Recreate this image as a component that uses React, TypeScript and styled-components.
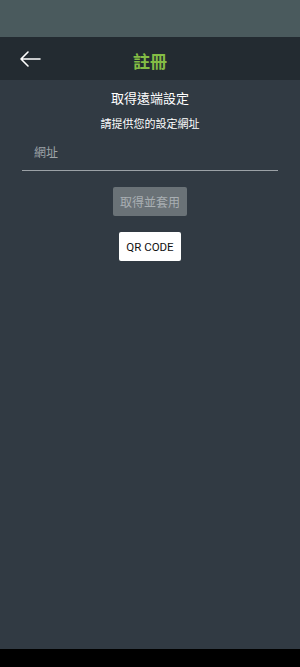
import React from "react";
import styled, { createGlobalStyle } from "styled-components";

const Global = createGlobalStyle`
  html, body { margin: 0; padding: 0; background: #000; }
  body { font-family: Roboto, "Noto Sans CJK TC", sans-serif; }
  * { box-sizing: border-box; }
`;

const Screen = styled.div`
  width: 300px;
  height: 667px;
  display: flex;
  flex-direction: column;
  background: #000;
`;

const StatusBar = styled.div`
  height: 37px;
  background: #4a5a5d;
  flex: none;
`;

const Header = styled.div`
  height: 43px;
  background: #232b31;
  display: flex;
  align-items: center;
  position: relative;
  flex: none;
`;

const BackButton = styled.div`
  width: 60px;
  height: 43px;
  display: flex;
  align-items: center;
  justify-content: center;
`;

const Title = styled.div`
  position: absolute;
  left: 0;
  right: 0;
  top: 0;
  bottom: 0;
  display: flex;
  align-items: center;
  justify-content: center;
  padding-top: 3px;
  color: #84bd45;
  font-weight: 700;
  font-size: 17px;
  font-family: "Noto Sans CJK TC", sans-serif;
  pointer-events: none;
`;

const Body = styled.div`
  flex: none;
  height: 569px;
  background: #313a43;
  display: flex;
  flex-direction: column;
  align-items: center;
  padding: 9px 22px 0;
`;

const Heading = styled.div`
  color: #ffffff;
  font-size: 13px;
  line-height: 18px;
  font-family: "Noto Sans CJK TC", sans-serif;
`;

const Sub = styled.div`
  color: #ffffff;
  font-size: 11px;
  line-height: 16px;
  margin-top: 8px;
  font-family: "Noto Sans CJK TC", sans-serif;
`;

const Field = styled.div`
  align-self: stretch;
  margin-top: 12px;
  padding: 0 12px 9px;
  border-bottom: 1px solid #9ba1a6;
  color: #9ea4a9;
  font-size: 12px;
  line-height: 18px;
  font-family: "Noto Sans CJK TC", sans-serif;
`;

const Button = styled.div<{ $light?: boolean }>`
  height: 29px;
  padding: 0 7px;
  display: flex;
  align-items: center;
  justify-content: center;
  border-radius: 2px;
  background: ${(p) => (p.$light ? "#ffffff" : "#6a7277")};
  color: ${(p) => (p.$light ? "#111111" : "#a9afb3")};
  font-size: ${(p) => (p.$light ? 11.5 : 12)}px;
  font-weight: 400;
  font-family: ${(p) =>
    p.$light ? 'Roboto, sans-serif' : '"Noto Sans CJK TC", sans-serif'};
`;

const Gap = styled.div<{ $h: number }>`
  height: ${(p) => p.$h}px;
  flex: none;
`;

const NavBar = styled.div`
  flex: 1;
  background: #000;
`;

export default function App() {
  return (
    <>
      <Global />
      <Screen>
        <StatusBar />
        <Header>
          <BackButton>
            <svg width="22" height="18" viewBox="0 0 22 18" fill="none">
              <path
                d="M21 9H2M9 2L2 9L9 16"
                stroke="#ffffff"
                strokeWidth="1.6"
                strokeLinecap="round"
                strokeLinejoin="round"
              />
            </svg>
          </BackButton>
          <Title>註冊</Title>
        </Header>
        <Body>
          <Heading>取得遠端設定</Heading>
          <Sub>請提供您的設定網址</Sub>
          <Field>網址</Field>
          <Gap $h={16} />
          <Button>取得並套用</Button>
          <Gap $h={16} />
          <Button $light>QR CODE</Button>
        </Body>
        <NavBar />
      </Screen>
    </>
  );
}
